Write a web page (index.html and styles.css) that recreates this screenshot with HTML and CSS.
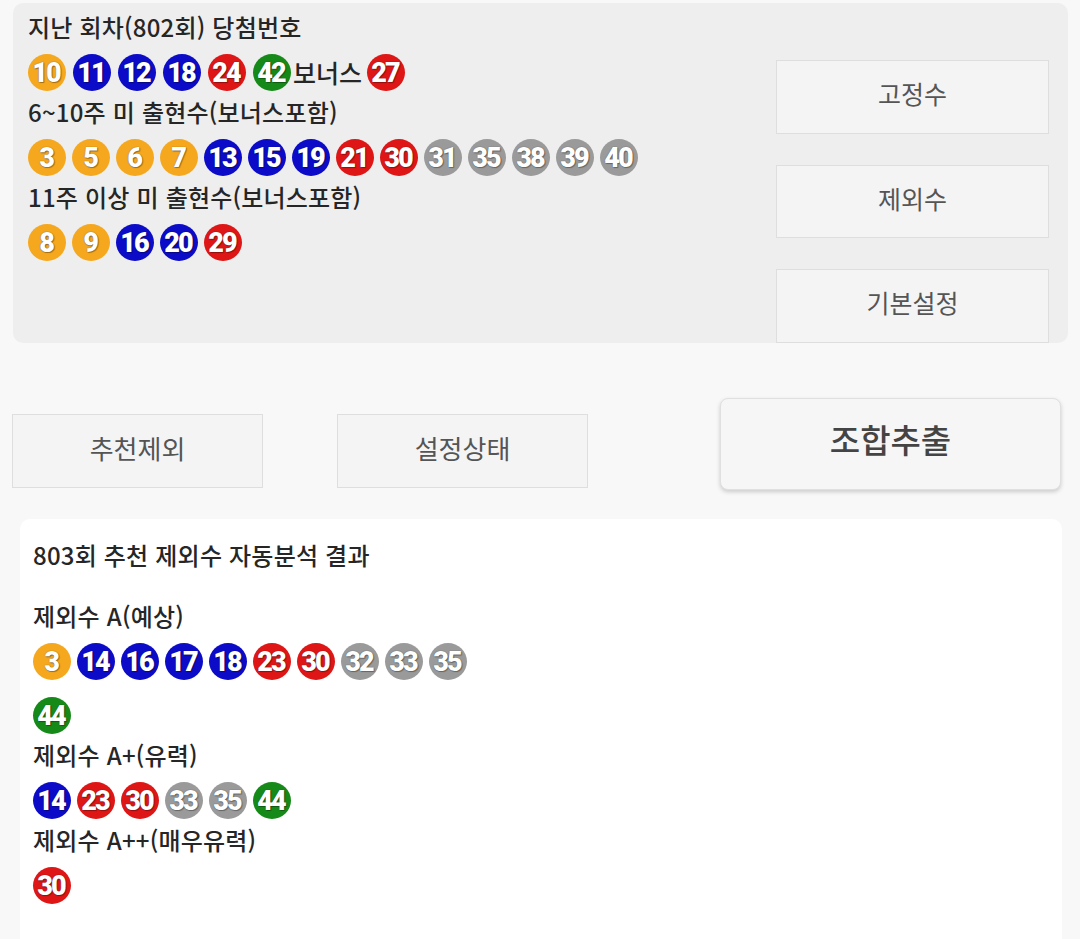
FILE: index.html
```html
<!DOCTYPE html>
<html lang="ko">
<head>
<meta charset="utf-8">
<link rel="stylesheet" href="styles.css">
</head>
<body>
<div class="panel">
  <div class="info">
    <div class="head">지난 회차(802회) 당첨번호</div>
    <div class="balls wide">
      <span class="ball y">10</span><span class="ball b">11</span><span class="ball b">12</span><span class="ball b">18</span><span class="ball r">24</span><span class="ball g">42</span><span class="bonus">보너스</span><span class="ball r">27</span>
    </div>
    <div class="head">6~10주 미 출현수(보너스포함)</div>
    <div class="balls">
      <span class="ball y">3</span><span class="ball y">5</span><span class="ball y">6</span><span class="ball y">7</span><span class="ball b">13</span><span class="ball b">15</span><span class="ball b">19</span><span class="ball r">21</span><span class="ball r">30</span><span class="ball k">31</span><span class="ball k">35</span><span class="ball k">38</span><span class="ball k">39</span><span class="ball k">40</span>
    </div>
    <div class="head">11주 이상 미 출현수(보너스포함)</div>
    <div class="balls">
      <span class="ball y">8</span><span class="ball y">9</span><span class="ball b">16</span><span class="ball b">20</span><span class="ball r">29</span>
    </div>
  </div>
  <div class="side">
    <div class="sbtn">고정수</div>
    <div class="sbtn">제외수</div>
    <div class="sbtn">기본설정</div>
  </div>
</div>

<div class="actions">
  <div class="abtn">추천제외</div>
  <div class="abtn second">설정상태</div>
  <div class="main-btn">조합추출</div>
</div>

<div class="card">
  <div class="card-title">803회 추천 제외수 자동분석 결과</div>
  <div class="head first">제외수 A(예상)</div>
  <div class="balls narrow">
    <span class="ball y">3</span><span class="ball b">14</span><span class="ball b">16</span><span class="ball b">17</span><span class="ball b">18</span><span class="ball r">23</span><span class="ball r">30</span><span class="ball k">32</span><span class="ball k">33</span><span class="ball k">35</span><span class="ball g">44</span>
  </div>
  <div class="head">제외수 A+(유력)</div>
  <div class="balls narrow">
    <span class="ball b">14</span><span class="ball r">23</span><span class="ball r">30</span><span class="ball k">33</span><span class="ball k">35</span><span class="ball g">44</span>
  </div>
  <div class="head">제외수 A++(매우유력)</div>
  <div class="balls narrow">
    <span class="ball r">30</span>
  </div>
</div>
</body>
</html>
```

FILE: styles.css
```css
* { box-sizing: border-box; }
html, body {
  margin: 0;
  padding: 0;
  background: #f8f8f8;
  font-family: "Noto Sans CJK KR", "Noto Sans", sans-serif;
  color: #2b2b2b;
}
body { width: 1080px; height: 939px; overflow: hidden; }

.panel {
  margin: 3px 12px 0 13px;
  height: 340px;
  background: #eeeeee;
  border-radius: 10px;
  display: flex;
  justify-content: space-between;
}
.info {
  padding: 9px 0 0 15px;
}
.head {
  font-size: 24px;
  font-weight: 500;
  letter-spacing: 0.2px;
  line-height: 30px;
  height: 30px;
  color: #262626;
  white-space: nowrap;
}
.balls {
  display: flex;
  flex-wrap: wrap;
  align-items: center;
  column-gap: 6px;
  row-gap: 17px;
  margin: 12px 0 6px;
}
.balls.wide { column-gap: 7px; }
.ball {
  width: 38px;
  height: 37px;
  border-radius: 50%;
  display: flex;
  align-items: center;
  justify-content: center;
  color: #fff;
  font-family: Roboto, "Liberation Sans", sans-serif;
  font-weight: 900;
  font-size: 27px;
  letter-spacing: -2px;
  text-indent: -2px;
  text-shadow: 0 0 1px rgba(0,0,0,0.6), 1px 1px 1px rgba(0,0,0,0.3);
}
.ball.y { background: #f5a81e; }
.ball.b { background: #0c0cc8; }
.ball.r { background: #de1616; }
.ball.k { background: #9a9a9a; }
.ball.g { background: #168a18; }
.bonus {
  font-size: 25px;
  font-weight: 500;
  color: #262626;
  margin: 0 -2px 0 -5px;
  line-height: 37px;
}

.side {
  width: 292px;
  padding: 57px 19px 0 0;
  display: flex;
  flex-direction: column;
  gap: 31px;
}
.sbtn {
  height: 74px;
  background: #f4f4f4;
  border: 1px solid #dedede;
  display: flex;
  align-items: center;
  justify-content: center;
  font-size: 25px;
  color: #555;
  padding-bottom: 8px;
}

.actions {
  display: flex;
  align-items: flex-start;
  margin: 55px 0 0 12px;
  height: 92px;
}
.abtn {
  width: 251px;
  height: 74px;
  margin-top: 16px;
  background: #f4f4f4;
  border: 1px solid #dedede;
  display: flex;
  align-items: center;
  justify-content: center;
  font-size: 26px;
  color: #555;
  padding-bottom: 8px;
}
.abtn.second { margin-left: 74px; }
.main-btn {
  width: 341px;
  height: 92px;
  margin-left: 132px;
  background: #f6f6f6;
  border: 1px solid #e0e0e0;
  border-radius: 8px;
  box-shadow: 0 2px 4px rgba(0,0,0,0.18);
  display: flex;
  align-items: center;
  justify-content: center;
  font-size: 33px;
  font-weight: 500;
  color: #444;
  padding-bottom: 10px;
}

.card {
  margin: 29px 18px 0 20px;
  height: 440px;
  background: #ffffff;
  border-radius: 10px;
  padding: 21px 0 0 13px;
}
.card-title {
  font-size: 24px;
  font-weight: 500;
  letter-spacing: 0.2px;
  line-height: 30px;
  color: #262626;
}
.head.first { margin-top: 31px; }
.balls.narrow { width: 452px; margin: 12px 0 6px; }
```
